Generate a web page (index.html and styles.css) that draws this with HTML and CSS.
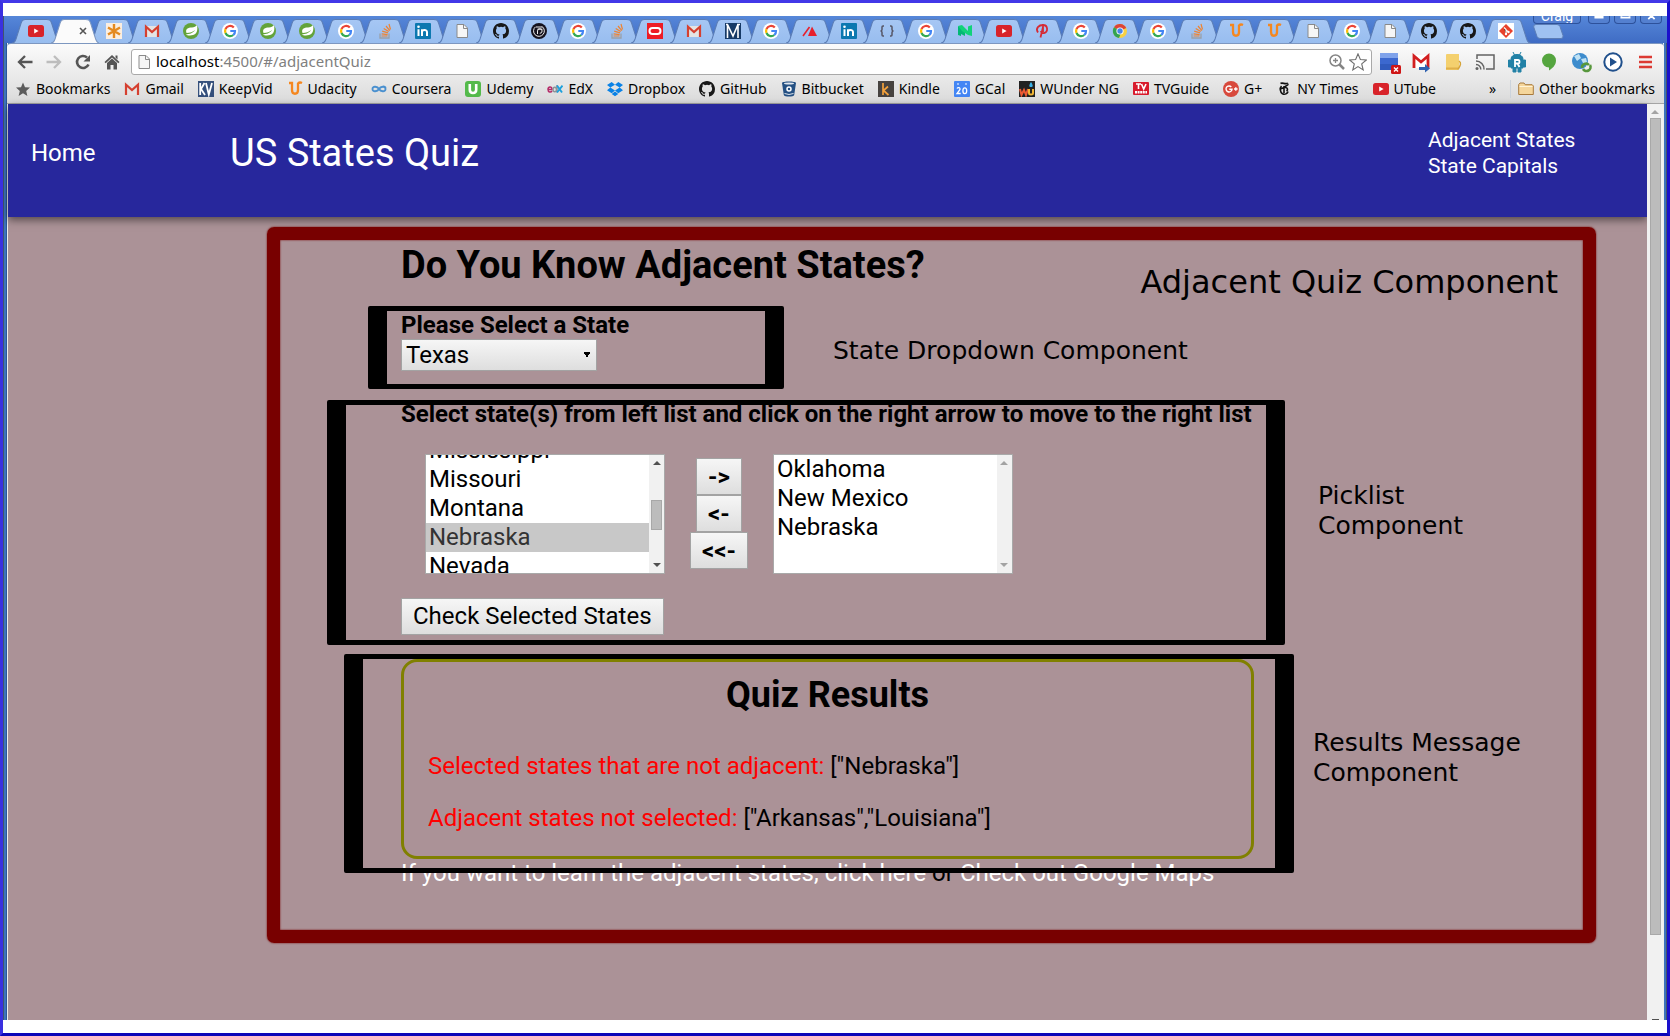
FILE: index.html
```html
<!DOCTYPE html>
<html lang="en">
<head>
<meta charset="utf-8">
<title>US States Quiz</title>
<link rel="stylesheet" href="styles.css">
</head>
<body>
<svg class="sprite" aria-hidden="true">
  <defs>
    <linearGradient id="tabfill" x1="0" y1="0" x2="0" y2="1"><stop offset="0" stop-color="#a6c7f4"/><stop offset="1" stop-color="#98bdef"/></linearGradient>
  </defs>
  <symbol id="tab" viewBox="0 0 48 24" preserveAspectRatio="none"><path d="M0 24 C3 24 3 22 4 20 L9 4 C10 1 11 .5 13 .5 L34 .5 C37 .5 38 1 39 4 L44 20 C45 22 45 24 48 24" fill="url(#tabfill)" stroke="#5b7db6"/></symbol>
  <symbol id="tab-on" viewBox="0 0 48 24" preserveAspectRatio="none"><path d="M0 24 C3 24 3 22 4 20 L9 4 C10 1 11 .5 13 .5 L34 .5 C37 .5 38 1 39 4 L44 20 C45 22 45 24 48 24" fill="#fbfbfb" stroke="#7d97c0"/></symbol>
  <symbol id="youtube" viewBox="0 0 16 16"><rect y="2" width="16" height="12" rx="2.5" fill="#d8232a"/><path d="M6.2 5.5v5l4.4-2.5z" fill="#fff"/></symbol>
  <symbol id="close" viewBox="0 0 16 16"><path d="M5 5l6 6M11 5l-6 6" stroke="#555" stroke-width="1.6"/></symbol>
  <symbol id="asterisk" viewBox="0 0 16 16"><rect width="16" height="16" fill="#fbeee0"/><path d="M8 1v14M2 4.5l12 7M14 4.5l-12 7" stroke="#e48a20" stroke-width="2.4"/></symbol>
  <symbol id="gmail" viewBox="0 0 16 16"><path d="M2 3h12v11H2z" fill="#e4e4e4"/><path d="M2 14V3.6L8 9l6-5.4V14" fill="none" stroke="#d54030" stroke-width="2.2"/></symbol>
  <symbol id="spring" viewBox="0 0 16 16"><circle cx="8" cy="8" r="8" fill="#63a33a"/><path d="M14 2c1 5 0 9-4 10-3 .8-6 .3-7-.6 3-.2 7-1 9-4.400-2 2-5 2.700-8.500 3C2 6 5 4.500 9 4.500c2 0 4-1 5-2.500z" fill="#fff"/></symbol>
  <symbol id="google" viewBox="0 0 16 16"><circle cx="8" cy="8" r="8" fill="#fff"/><g fill="none" stroke-width="2.200"><path d="M11.800 4.600A5 5 0 0 0 3.500 6" stroke="#ea4335"/><path d="M3.500 6a5 5 0 0 0 0 4" stroke="#fbbc05"/><path d="M3.500 10a5 5 0 0 0 7.800 2" stroke="#34a853"/><path d="M11.300 12A5 5 0 0 0 13 8H8.300" stroke="#4285f4"/></g></symbol>
  <symbol id="stack" viewBox="0 0 16 16"><path d="M3 10.500V15h9v-4.500" fill="none" stroke="#9aa0a8" stroke-width="1.300"/><path d="M4.500 13h6M4.600 10.800l6 .8M5.200 8.200l5.800 1.700M6.700 5.400l5 3.200M9 3l3.800 4.600M12 1l1.500 5.500" stroke="#ee8432" stroke-width="1.200"/></symbol>
  <symbol id="linkedin" viewBox="0 0 16 16"><rect width="16" height="16" rx="1" fill="#0c78b0"/><path d="M3.500 6.300V13M7 6.300V13M7 9c0-2.500 5-2.700 5 0v4" stroke="#fff" stroke-width="2" fill="none"/><circle cx="3.500" cy="3.700" r="1.300" fill="#fff"/></symbol>
  <symbol id="doc" viewBox="0 0 16 16"><path d="M3 1.500h7l3.500 3.500v9.500H3z" fill="#f6f6f6" stroke="#8a8a8a"/><path d="M9.500 1.500V5.500h4" fill="none" stroke="#8a8a8a"/></symbol>
  <symbol id="github" viewBox="0 0 16 16"><path fill="#181818" d="M8 0C3.580 0 0 3.580 0 8c0 3.540 2.290 6.530 5.470 7.590.4.070.55-.17.55-.38 0-.19-.01-.82-.01-1.490-2.010.37-2.530-.49-2.690-.94-.09-.23-.48-.94-.82-1.130-.28-.15-.68-.52-.01-.53.63-.01 1.080.58 1.230.82.720 1.210 1.870.87 2.330.66.070-.52.28-.87.51-1.070-1.780-.2-3.640-.89-3.640-3.950 0-.87.310-1.590.82-2.150-.08-.2-.36-1.020.08-2.120 0 0 .67-.21 2.200.82a7.600 7.600 0 0 1 4 0c1.530-1.040 2.200-.82 2.200-.82.440 1.100.16 1.920.08 2.120.510.560.82 1.270.82 2.150 0 3.070-1.870 3.750-3.650 3.950.290.250.540.730.540 1.480 0 1.070-.01 1.930-.01 2.200 0 .210.150.460.55.380A8 8 0 0 0 16 8c0-4.420-3.580-8-8-8z"/></symbol>
  <symbol id="target" viewBox="0 0 16 16"><circle cx="8" cy="8" r="8" fill="#15131f"/><path d="M4.500 3.800A5.400 5.400 0 1 0 11 3.500M5 4h6.500M6.500 11V8a2.300 2.300 0 1 1 2.300 2.300M6.500 6.200h5" fill="none" stroke="#eee" stroke-width="1"/></symbol>
  <symbol id="oracle" viewBox="0 0 16 16"><rect width="16" height="16" fill="#ee1c25"/><rect x="2.500" y="5" width="11" height="6" rx="3" fill="none" stroke="#fff" stroke-width="2"/></symbol>
  <symbol id="mbox" viewBox="0 0 16 16"><rect width="16" height="16" fill="#173a66"/><path d="M2.500 15V1.500L8 13l5-11.500V15M1 1.500h2M12 1.500h3" fill="none" stroke="#fff" stroke-width="1.600"/></symbol>
  <symbol id="redtri" viewBox="0 0 16 16"><path d="M10 3.500l5 9.500H6z" fill="#e8202c"/><path d="M7.500 4L1 13" stroke="#e8202c" stroke-width="1.600"/></symbol>
  <symbol id="braces" viewBox="0 0 16 16"><path d="M5 3H4Q3 3 3 4v2.500Q3 8 1.500 8 3 8 3 9.500V12q0 1 1 1h1M11 3h1q1 0 1 1v2.500Q13 8 14.500 8 13 8 13 9.500V12q0 1-1 1h-1" fill="none" stroke="#556" stroke-width="1.500"/></symbol>
  <symbol id="medium" viewBox="0 0 16 16"><path d="M1 3l7 4v6l-4-2v2l-3-1z" fill="#02b875"/><path d="M1 3l4-1 6 6V3.500L15 2v11l-4-1-6-4" fill="#10d37a"/></symbol>
  <symbol id="pin" viewBox="0 0 16 16"><path d="M4 9.500C1 5 5 2 9 2c5 0 5.500 7 1 8-1.500.3-3-.5-3-2M9 4L6.500 14.500M9 1v8" fill="none" stroke="#d52b35" stroke-width="1.800"/></symbol>
  <symbol id="chrome" viewBox="0 0 16 16"><circle cx="8" cy="8" r="7" fill="#f8d043"/><path d="M8 8L2 4.200A7 7 0 0 1 14.200 5z" fill="#dc4437"/><path d="M8 8L2 4.200A7 7 0 0 0 7 15l2-5z" fill="#32a350"/><circle cx="8" cy="8" r="3.600" fill="#fff"/><circle cx="8" cy="8" r="2.700" fill="#4a86e8"/></symbol>
  <symbol id="udacity" viewBox="0 0 16 16"><path d="M2 2h3v7c0 5 6 5 6 0V2.500c1-1 3-1 4-.5" fill="none" stroke="#f5871f" stroke-width="2.300"/></symbol>
  <symbol id="git" viewBox="0 0 16 16"><rect width="16" height="16" fill="#fff"/><path d="M8 1l7 7-7 7-7-7z" fill="#e8412c"/><path d="M6 4.500l2 2v5M8 7l2.500 2" stroke="#fff" stroke-width="1.200"/><circle cx="8" cy="11" r="1.200" fill="#fff"/><circle cx="10.500" cy="9" r="1.200" fill="#fff"/></symbol>

  <symbol id="back" viewBox="0 0 16 16"><path d="M8 2L2 8l6 6M2 8h13.500" fill="none" stroke="currentColor" stroke-width="2.300"/></symbol>
  <symbol id="reload" viewBox="0 0 16 16"><path d="M13.500 10.500A6 6 0 1 1 12 3.500" fill="none" stroke="currentColor" stroke-width="2.600"/><path d="M15 1v6.500H8.500z" fill="currentColor"/></symbol>
  <symbol id="home" viewBox="0 0 16 16"><path d="M8 1l7.500 7-1.200 1.300L8 3.600 1.700 9.300.5 8zM3 9l5-4.500L13 9v6.500H9.500V11h-3v4.500H3zM11.500 1.500h2v4l-2-2z" fill="currentColor"/></symbol>
  <symbol id="magnify" viewBox="0 0 16 16"><circle cx="6.500" cy="6.500" r="5.500" fill="none" stroke="#858585" stroke-width="1.500"/><path d="M4 6.500h5M6.500 4v5" stroke="#858585" stroke-width="1.300"/><path d="M10.500 10.500l4.500 4.500" stroke="#858585" stroke-width="2.500"/></symbol>
  <symbol id="star" viewBox="0 0 16 16"><path d="M8 .8l2.100 5 5.300.4-4.100 3.500 1.300 5.300L8 12.100 3.400 15l1.300-5.300L.6 6.200l5.300-.4z" fill="none" stroke="#6e6e6e"/></symbol>
  <symbol id="starfill" viewBox="0 0 16 16"><path d="M8 1.500l2 4.700 5 .4-3.800 3.300 1.200 5L8 12.200l-4.400 2.700 1.200-5L1 6.600l5-.4z" fill="#5c5c5c"/></symbol>
  <symbol id="keepvid" viewBox="0 0 16 16"><rect width="16" height="16" fill="#35507c"/><path d="M2.200 2v12M6.500 2L3 8l4 6M8 2l2.800 11.500L14 2" fill="none" stroke="#fff" stroke-width="1.800"/></symbol>
  <symbol id="coursera" viewBox="0 0 16 16"><path d="M8 8C6.500 5.500 1.500 4.500 1.500 8S6.500 10.500 8 8s6.500-3.500 6.500-1M8 8c1.500 2.500 6.500 3.500 6.500 0S9.500 5.500 8 8z" fill="none" stroke="#4a90cf" stroke-width="1.900"/></symbol>
  <symbol id="udemy" viewBox="0 0 16 16"><rect width="16" height="16" rx="3" fill="#54ba4b"/><path d="M4.800 3v5.800c0 4.200 6.400 4.200 6.400 0V3" fill="none" stroke="#fff" stroke-width="2.600"/></symbol>
  <symbol id="edx" viewBox="0 0 16 16"><path d="M1 8.500h4C5 5 1 5.500 1 8.500s3 3 4 1.500" fill="none" stroke="#b52b68" stroke-width="1.500"/><path d="M10 4v7.500M9.500 8.500c0-3-3.500-3-3.500 0s3.500 3 3.500 0" fill="none" stroke="#8e9498" stroke-width="1.500"/><path d="M10 4.500l5 7M15.500 4.500l-5.500 7" stroke="#1ca0dc" stroke-width="1.900"/></symbol>
  <symbol id="dropbox" viewBox="0 0 16 16"><path d="M4.700 1L8 3.700 3.300 6.600 0 4zM11.300 1L16 4l-3.300 2.600L8 3.700zM0 9.300l3.300-2.700L8 9.500l-3.300 2.700zM16 9.300l-3.300-2.700L8 9.500l3.300 2.700zM8 10.400l3.300 2.700L8 15.300l-3.300-2.200z" fill="#0a82e6"/></symbol>
  <symbol id="bitbucket" viewBox="0 0 16 16"><path d="M1 2c0-2 14-2 14 0l-1.800 12c-.5 2-9.900 2-10.400 0z" fill="#245083"/><ellipse cx="8" cy="2.500" rx="5" ry="1.100" fill="#dfe6ee"/><circle cx="8" cy="8" r="2" fill="none" stroke="#fff" stroke-width="1.500"/><path d="M3.500 12.500q4.500 2 9 0" stroke="#dfe6ee" fill="none"/></symbol>
  <symbol id="kindle" viewBox="0 0 16 16"><rect width="16" height="16" fill="#474340"/><path d="M5 2v12M10 5.500l-4.500 4L10.500 14" fill="none" stroke="#f3a13b" stroke-width="1.700"/></symbol>
  <symbol id="gcal" viewBox="0 0 16 16"><rect width="16" height="16" rx="1" fill="#4486f4"/><path d="M4 2v2M12 2v2" stroke="#cfe0ff" stroke-width="1.300"/><path d="M3 7.500c1-1.500 3.500-1 3 1L3 12.500h3.700" fill="none" stroke="#fff" stroke-width="1.300"/><ellipse cx="10.800" cy="9.700" rx="1.900" ry="2.900" fill="none" stroke="#fff" stroke-width="1.300"/></symbol>
  <symbol id="wunder" viewBox="0 0 16 16"><rect width="16" height="16" fill="#222"/><path d="M1 8l1.500 6L5 9l2 5 2-6" fill="none" stroke="#ee5a32" stroke-width="2"/><path d="M10 8v4c0 2 4 2 4 0V8" fill="none" stroke="#f2b632" stroke-width="2"/><path d="M12 1c2 3 2.500 5 0 5s-2-2 0-5z" fill="#3ab3e8"/></symbol>
  <symbol id="tvguide" viewBox="0 0 16 16"><rect y="1" width="16" height="13" rx="1" fill="#d81b2c"/><path d="M3 3h5M5.500 3v5M8.500 3l2.200 5L13 3" fill="none" stroke="#fff" stroke-width="1.600"/><path d="M2 11.300h12" stroke="#fff" stroke-width="2.600" stroke-dasharray="2 .6"/></symbol>
  <symbol id="gplus" viewBox="0 0 16 16"><circle cx="8" cy="8" r="8" fill="#d8493c"/><path d="M8.300 6A3 3 0 1 0 9 8.300H6.300M11 8h3.600M12.800 6.200v3.600" fill="none" stroke="#fff" stroke-width="1.400"/></symbol>
  <symbol id="nyt" viewBox="0 0 16 16"><path d="M4.500 2.500c2-1.500 5 1.500 7.500-.5M5.500 5C3.500 7 4 11 6.500 12.800c2.500 1.200 5-.3 5.500-2.300M8 5v7M12 3c.5 2-4 1.500-2.500 3.500C12 7 12 9 10.500 10M4.500 8L8 6.500" fill="none" stroke="#111" stroke-width="1.600"/></symbol>
  <symbol id="folder" viewBox="0 0 16 16"><path d="M.7 13.500v-10L2 2h4l1.200 1.700h7l1.100 1.200v8.600z" fill="#f5d69b" stroke="#a87a3c"/><path d="M1.500 5.500h13" stroke="#fff3d5"/></symbol>
  <symbol id="x-cal" viewBox="0 0 24 24"><path d="M3 3h18v17H3z" fill="#3c68cf"/><path d="M3 3h18v5H3z" fill="#7fa2ea"/><path d="M3 14h18v6H3z" fill="#315bbd"/><rect x="14" y="15" width="10" height="9" rx="1.500" fill="#cf1616"/><path d="M17 17.500l4 4M21 17.500l-4 4" stroke="#fff" stroke-width="1.400"/></symbol>
  <symbol id="x-mail" viewBox="0 0 24 24"><rect x="4" y="5" width="16" height="13" fill="#fff"/><path d="M5 18V6l7 6 7-6v12" fill="none" stroke="#d21f20" stroke-width="2.800"/><path d="M10 17h6v-3l5 4.500-5 4V20h-6z" fill="#2f62b0"/></symbol>
  <symbol id="x-note" viewBox="0 0 24 24"><path d="M5 5q0-1 1-1h12v14l-1 2H5z" fill="#f4d06e"/><path d="M5 17.500h12v2H5z" fill="#e0b04a"/><path d="M18 11c3 2 1 5-1 8.500" stroke="#d6a439" stroke-width="1.500" fill="none"/></symbol>
  <symbol id="x-cast" viewBox="0 0 24 24"><path d="M4 9V5h17v14h-8M3 11a8 8 0 0 1 8 8.500M3 14.500a5 5 0 0 1 4.800 5" fill="none" stroke="#636363" stroke-width="1.500"/><circle cx="4" cy="18.500" r="1.500" fill="#636363"/></symbol>
  <symbol id="x-bot" viewBox="0 0 24 24"><path d="M6 9c0-6 12-6 12 0v9H6zM3.500 10h2v7h-2zM18.500 10h2v7h-2zM8 18h3v4H8zM13 18h3v4h-3zM8 2l2 4M16 2l-2 4" fill="#2281a6" stroke="#2281a6"/><path d="M10 17v-7h3c2 0 2 3.500 0 3.500h-3M12.500 13.500L14.500 17" fill="none" stroke="#fff" stroke-width="1.800"/></symbol>
  <symbol id="x-hang" viewBox="0 0 24 24"><path d="M12 3.500a7 7 0 0 1 7 7c0 5-4 8-7 10v-3a7 7 0 0 1 0-14z" fill="#55a53f"/></symbol>
  <symbol id="x-globe" viewBox="0 0 24 24"><circle cx="11" cy="11" r="8" fill="#3d8ccd"/><path d="M5 6l5-2 2 4-4 3zM12 9l5-1 1 4-3 3z" fill="#bfe1f4"/><path d="M13 18a4 4 0 0 1 7-3M21 15a4 4 0 0 1-7 4" fill="none" stroke="#57973c" stroke-width="2.600"/></symbol>
  <symbol id="x-play" viewBox="0 0 24 24"><circle cx="12" cy="12" r="8.700" fill="#fff" stroke="#20508c" stroke-width="2"/><path d="M9 7.500v9l7-4.500z" fill="#20508c"/></symbol>
  <symbol id="x-menu" viewBox="0 0 24 24"><path d="M6 7h13M6 12h13M6 17h13" stroke="#dc3a33" stroke-width="2.600"/></symbol>
</svg>

<div class="browser">
  <div class="titlebar">
    <nav class="tabs" aria-label="Open tabs">
      <button class="tab"><svg class="shape"><use href="#tab"/></svg><svg class="fav"><use href="#youtube"/></svg></button>
      <button class="tab current"><svg class="shape"><use href="#tab-on"/></svg><svg class="fav"><use href="#close"/></svg></button>
      <button class="tab"><svg class="shape"><use href="#tab"/></svg><svg class="fav"><use href="#asterisk"/></svg></button>
      <button class="tab"><svg class="shape"><use href="#tab"/></svg><svg class="fav"><use href="#gmail"/></svg></button>
      <button class="tab"><svg class="shape"><use href="#tab"/></svg><svg class="fav"><use href="#spring"/></svg></button>
      <button class="tab"><svg class="shape"><use href="#tab"/></svg><svg class="fav"><use href="#google"/></svg></button>
      <button class="tab"><svg class="shape"><use href="#tab"/></svg><svg class="fav"><use href="#spring"/></svg></button>
      <button class="tab"><svg class="shape"><use href="#tab"/></svg><svg class="fav"><use href="#spring"/></svg></button>
      <button class="tab"><svg class="shape"><use href="#tab"/></svg><svg class="fav"><use href="#google"/></svg></button>
      <button class="tab"><svg class="shape"><use href="#tab"/></svg><svg class="fav"><use href="#stack"/></svg></button>
      <button class="tab"><svg class="shape"><use href="#tab"/></svg><svg class="fav"><use href="#linkedin"/></svg></button>
      <button class="tab"><svg class="shape"><use href="#tab"/></svg><svg class="fav"><use href="#doc"/></svg></button>
      <button class="tab"><svg class="shape"><use href="#tab"/></svg><svg class="fav"><use href="#github"/></svg></button>
      <button class="tab"><svg class="shape"><use href="#tab"/></svg><svg class="fav"><use href="#target"/></svg></button>
      <button class="tab"><svg class="shape"><use href="#tab"/></svg><svg class="fav"><use href="#google"/></svg></button>
      <button class="tab"><svg class="shape"><use href="#tab"/></svg><svg class="fav"><use href="#stack"/></svg></button>
      <button class="tab"><svg class="shape"><use href="#tab"/></svg><svg class="fav"><use href="#oracle"/></svg></button>
      <button class="tab"><svg class="shape"><use href="#tab"/></svg><svg class="fav"><use href="#gmail"/></svg></button>
      <button class="tab"><svg class="shape"><use href="#tab"/></svg><svg class="fav"><use href="#mbox"/></svg></button>
      <button class="tab"><svg class="shape"><use href="#tab"/></svg><svg class="fav"><use href="#google"/></svg></button>
      <button class="tab"><svg class="shape"><use href="#tab"/></svg><svg class="fav"><use href="#redtri"/></svg></button>
      <button class="tab"><svg class="shape"><use href="#tab"/></svg><svg class="fav"><use href="#linkedin"/></svg></button>
      <button class="tab"><svg class="shape"><use href="#tab"/></svg><svg class="fav"><use href="#braces"/></svg></button>
      <button class="tab"><svg class="shape"><use href="#tab"/></svg><svg class="fav"><use href="#google"/></svg></button>
      <button class="tab"><svg class="shape"><use href="#tab"/></svg><svg class="fav"><use href="#medium"/></svg></button>
      <button class="tab"><svg class="shape"><use href="#tab"/></svg><svg class="fav"><use href="#youtube"/></svg></button>
      <button class="tab"><svg class="shape"><use href="#tab"/></svg><svg class="fav"><use href="#pin"/></svg></button>
      <button class="tab"><svg class="shape"><use href="#tab"/></svg><svg class="fav"><use href="#google"/></svg></button>
      <button class="tab"><svg class="shape"><use href="#tab"/></svg><svg class="fav"><use href="#chrome"/></svg></button>
      <button class="tab"><svg class="shape"><use href="#tab"/></svg><svg class="fav"><use href="#google"/></svg></button>
      <button class="tab"><svg class="shape"><use href="#tab"/></svg><svg class="fav"><use href="#stack"/></svg></button>
      <button class="tab"><svg class="shape"><use href="#tab"/></svg><svg class="fav"><use href="#udacity"/></svg></button>
      <button class="tab"><svg class="shape"><use href="#tab"/></svg><svg class="fav"><use href="#udacity"/></svg></button>
      <button class="tab"><svg class="shape"><use href="#tab"/></svg><svg class="fav"><use href="#doc"/></svg></button>
      <button class="tab"><svg class="shape"><use href="#tab"/></svg><svg class="fav"><use href="#google"/></svg></button>
      <button class="tab"><svg class="shape"><use href="#tab"/></svg><svg class="fav"><use href="#doc"/></svg></button>
      <button class="tab"><svg class="shape"><use href="#tab"/></svg><svg class="fav"><use href="#github"/></svg></button>
      <button class="tab"><svg class="shape"><use href="#tab"/></svg><svg class="fav"><use href="#github"/></svg></button>
      <button class="tab"><svg class="shape"><use href="#tab"/></svg><svg class="fav"><use href="#git"/></svg></button>
    </nav>
    <button class="newtab" aria-label="New tab"><svg viewBox="0 0 31 15"><path d="M3 .5h21q2 0 3 2l3 9q.5 3-2 3H7q-2 0-3-2L.7 3q-.5-2.500 2.300-2.500z" fill="#9fc2f2" stroke="#5b7db6"/></svg></button>
    <div class="controls">
      <button class="user">Craig</button>
      <button class="win" aria-label="Minimize"><svg viewBox="0 0 22 7"><path d="M6 1h10" stroke="#fff" stroke-width="3"/></svg></button>
      <button class="win" aria-label="Maximize"><svg viewBox="0 0 22 7"><path d="M7 0v1.500h9V0" fill="none" stroke="#fff" stroke-width="2"/></svg></button>
      <button class="win" aria-label="Close"><svg viewBox="0 0 22 7"><path d="M8 3l3.500-3.500L15 3" fill="none" stroke="#fff" stroke-width="2"/></svg></button>
    </div>
  </div>

  <div class="chrome">
    <div class="toolbar">
      <div class="navbtns">
        <button aria-label="Back"><svg class="fav"><use href="#back"/></svg></button>
        <button class="off" aria-label="Forward"><svg class="fav flip"><use href="#back"/></svg></button>
        <button aria-label="Reload"><svg class="fav"><use href="#reload"/></svg></button>
        <button aria-label="Home page"><svg class="fav"><use href="#home"/></svg></button>
      </div>
      <div class="omnibox">
        <svg class="fav"><use href="#doc"/></svg>
        <span class="url" role="textbox" aria-label="Address">localhost<span>:4500/#/adjacentQuiz</span></span>
        <svg class="fav"><use href="#magnify"/></svg>
        <svg class="fav big"><use href="#star"/></svg>
      </div>
      <div class="extensions">
        <svg><use href="#x-cal"/></svg><svg><use href="#x-mail"/></svg><svg><use href="#x-note"/></svg><svg><use href="#x-cast"/></svg><svg><use href="#x-bot"/></svg><svg><use href="#x-hang"/></svg><svg><use href="#x-globe"/></svg><svg><use href="#x-play"/></svg><svg><use href="#x-menu"/></svg>
      </div>
    </div>
    <nav class="bookmarks" aria-label="Bookmarks">
      <a href="#"><svg class="fav"><use href="#starfill"/></svg>Bookmarks</a>
      <a href="#"><svg class="fav"><use href="#gmail"/></svg>Gmail</a>
      <a href="#"><svg class="fav"><use href="#keepvid"/></svg>KeepVid</a>
      <a href="#"><svg class="fav"><use href="#udacity"/></svg>Udacity</a>
      <a href="#"><svg class="fav"><use href="#coursera"/></svg>Coursera</a>
      <a href="#"><svg class="fav"><use href="#udemy"/></svg>Udemy</a>
      <a href="#"><svg class="fav"><use href="#edx"/></svg>EdX</a>
      <a href="#"><svg class="fav"><use href="#dropbox"/></svg>Dropbox</a>
      <a href="#"><svg class="fav"><use href="#github"/></svg>GitHub</a>
      <a href="#"><svg class="fav"><use href="#bitbucket"/></svg>Bitbucket</a>
      <a href="#"><svg class="fav"><use href="#kindle"/></svg>Kindle</a>
      <a href="#"><svg class="fav"><use href="#gcal"/></svg>GCal</a>
      <a href="#"><svg class="fav"><use href="#wunder"/></svg>WUnder NG</a>
      <a href="#"><svg class="fav"><use href="#tvguide"/></svg>TVGuide</a>
      <a href="#"><svg class="fav"><use href="#gplus"/></svg>G+</a>
      <a href="#"><svg class="fav"><use href="#nyt"/></svg>NY Times</a>
      <a href="#"><svg class="fav"><use href="#youtube"/></svg>UTube</a>
      <button class="more">»</button>
      <a class="other" href="#"><svg class="fav"><use href="#folder"/></svg>Other bookmarks</a>
    </nav>
  </div>

  <div class="viewport">
    <div class="page">
      <header class="site">
        <a class="homelink" href="#">Home</a>
        <span class="brand">US States Quiz</span>
        <nav class="menu" aria-label="Quizzes"><a href="#">Adjacent States</a><a href="#">State Capitals</a></nav>
      </header>
      <main class="quiz">
        <span class="note note-quiz">Adjacent Quiz Component</span>
        <div class="column">
          <h1>Do You Know Adjacent States?</h1>
          <section class="part dropdown">
            <label for="state">Please Select a State</label>
            <select id="state"><option>Texas</option></select>
            <span class="note note-dropdown">State Dropdown Component</span>
          </section>
          <section class="part picklist">
            <h3 id="pick">Select state(s) from left list and click on the right arrow to move to the right list</h3>
            <div class="lists">
              <div class="listbox">
                <select id="from" multiple aria-labelledby="pick">
                  <option>Michigan</option><option>Minnesota</option><option>Mississippi</option><option>Missouri</option><option>Montana</option><option class="picked">Nebraska</option><option>Nevada</option><option>New Hampshire</option><option>New Jersey</option>
                </select>
                <div class="bar"><i class="up"></i><i class="thumb"></i><i class="down"></i></div>
              </div>
              <div class="movers"><button>-&gt;</button><button>&lt;-</button><button>&lt;&lt;-</button></div>
              <div class="listbox idle">
                <select multiple aria-label="Adjacent states picked"><option>Oklahoma</option><option>New Mexico</option><option>Nebraska</option></select>
                <div class="bar"><i class="up"></i><i class="down"></i></div>
              </div>
            </div>
            <button class="check">Check Selected States</button>
            <span class="note note-picklist">Picklist<br>Component</span>
          </section>
          <section class="part results">
            <div class="panel">
              <h2>Quiz Results</h2>
              <p><em>Selected states that are not adjacent:</em> ["Nebraska"]</p>
              <p><em>Adjacent states not selected:</em> ["Arkansas","Louisiana"]</p>
            </div>
            <span class="note note-results">Results Message<br>Component</span>
          </section>
          <p class="learn"><a href="#">If you want to learn the adjacent states, click here</a> or <a href="#">Check out Google Maps</a></p>
        </div>
      </main>
    </div>
    <div class="scroll"><i class="up"></i><i class="thumb"></i><i class="dash"></i></div>
  </div>
</div>
<script src="script.js"></script>
</body>
</html>
```
FILE: styles.css
```css
* { box-sizing: border-box; }
body {
  margin: 0;
  min-height: 100vh;
  display: flex;
  flex-direction: column;
  padding: 13px 0;
  border: 3px solid;
  border-color: #4238e8 #1a10cc #0c06b8 #3a30e0;
  background: #fff;
  font-family: Roboto, sans-serif;
  color: #000;
}
button, select { font: inherit; color: inherit; margin: 0; }
a { color: inherit; text-decoration: none; }
.sprite { position: absolute; width: 0; height: 0; }
.fav { display: block; width: 16px; height: 16px; flex: none; }

.browser {
  flex: 1;
  display: flex;
  flex-direction: column;
  padding: 0 4px 0 5px;
  background: linear-gradient(90deg, #42536e 0 1px, #3c74bb 1px 3px, #2a559b 3px 4px, #eee 4px 5px, #3c74bb 5px calc(100% - 4px), #eee calc(100% - 4px) calc(100% - 3px), #3c74bb calc(100% - 3px) calc(100% - 1px), #42536e calc(100% - 1px));
}
.titlebar {
  height: 27px;
  margin: 0 -4px;
  padding-left: 13px;
  display: flex;
  align-items: flex-end;
  background: linear-gradient(#5687d9, #3f6cc4);
}
.tabs { flex: 1; display: flex; height: 24px; }
.tab {
  flex: 1;
  position: relative;
  display: grid;
  place-items: center;
  padding: 0;
  border: 0;
  background: none;
}
.tab .shape { position: absolute; left: -5px; top: 0; width: calc(100% + 10px); height: 100%; }
.tab .fav { position: relative; }
.tab.current { z-index: 1; }
.tab.current .fav { left: 8px; }
.newtab { margin: 0 0 4px 7px; padding: 0; border: 0; background: none; width: 31px; height: 15px; }
.newtab svg { display: block; }
.controls { display: flex; align-self: flex-start; gap: 4px; margin-left: -31px; padding-right: 5px; }
.controls button {
  height: 8px;
  padding: 0;
  overflow: hidden;
  border: 1px solid #2d519b;
  border-top: 0;
  border-radius: 0 0 4px 4px;
  background: #5480d0;
  color: #fff;
}
.controls .user { display: flex; align-items: flex-end; justify-content: center; width: 48px; margin-right: 3px; font-size: 14px; line-height: 14px; }
.controls .win { width: 22px; }
.controls svg { display: block; width: 20px; height: 7px; }

.chrome {
  margin: 0 -1px;
  border-top: 1px solid #7d97c0;
  border-bottom: 1px solid #a5a5a5;
  border-radius: 4px 4px 0 0;
  background: linear-gradient(#fbfbfb, #dbdbdb);
}
.toolbar { display: flex; align-items: center; height: 36px; padding: 0 7px 0 10px; }
.navbtns { display: flex; gap: 13px; width: 114px; color: #555; }
.navbtns button { padding: 0; border: 0; background: none; }
.navbtns .off { color: #bdbdbd; }
.flip { transform: scaleX(-1); }
.omnibox {
  flex: 1;
  display: flex;
  align-items: center;
  gap: 4px;
  height: 26px;
  padding: 0 4px;
  border: 1px solid #a9a9a9;
  border-radius: 3px;
  background: #fff;
  font: 15px/24px "Noto Sans", sans-serif;
}
.url { flex: 1; padding-bottom: 2px; }
.url span { color: #808080; }
.fav.big { width: 18px; height: 18px; }
.extensions { display: flex; gap: 8px; margin-left: 5px; }
.extensions svg { width: 24px; height: 24px; }
.bookmarks {
  display: flex;
  align-items: center;
  gap: 14px;
  height: 23px;
  padding: 0 9px 5px 8px;
  font: 14px/18px "Noto Sans", sans-serif;
}
.bookmarks a { display: flex; align-items: center; gap: 5px; white-space: nowrap; }
.more { margin-left: auto; padding: 0; border: 0; background: none; }
.other { padding-left: 7px; border-left: 1px solid #ccd3dc; }

.viewport { flex: 1; display: grid; grid-template-columns: 1fr 16px; }
.page { background: #ab9297; }
.site {
  display: grid;
  grid-template-columns: 199px 1fr 197px;
  align-items: center;
  height: 113px;
  padding: 0 22px 16px 23px;
  background: #27279c;
  color: #fff;
  font-size: 24px;
  box-shadow: 0 3px 8px rgba(0, 0, 0, .5);
}
.brand { font-size: 38px; }
.menu { display: flex; flex-direction: column; font-size: 21px; line-height: 26px; }
.quiz {
  position: relative;
  margin: 10px 51px 77px 259px;
  padding: 4px 0 43px 121px;
  border: 13px solid #780000;
  border-radius: 7px;
  box-shadow: 0 0 2px #780000, inset 0 0 2px #780000;
  font-size: 24px;
  line-height: 28px;
}
.column { width: max-content; min-width: 853px; }
h1, h2, h3, p { margin: 0; }
h1 { font-size: 38px; line-height: 42px; }
h2 { font-size: 36px; line-height: 42px; }
h3 { font-size: 24px; line-height: 28px; }
.part { position: relative; }
.part::after {
  content: "";
  position: absolute;
  border: solid #000;
  border-width: 5px 19px;
  border-radius: 2px;
  pointer-events: none;
}
.dropdown { margin-top: 25px; width: 383px; }
.dropdown::after { inset: -5px 0 -18px -33px; }
.dropdown label { display: block; font-weight: bold; }
#state {
  appearance: none;
  display: block;
  width: 196px;
  height: 32px;
  padding: 0 4px;
  border: 1px solid #a3a3a3;
  border-radius: 0;
  background:
    conic-gradient(from -30deg at 50% 100%, #000 60deg, transparent 0) right 6px center / 6px 6px no-repeat,
    linear-gradient(#f6f6f6, #dedede);
}
.picklist { margin-top: 29px; }
.picklist::after { inset: 0 -31px -10px -74px; }
.lists { display: flex; align-items: flex-start; gap: 25px; margin: 26px 24px 24px; }
.listbox { display: flex; width: 240px; height: 120px; border: 1px solid #a9a9a9; background: #fff; }
.listbox select {
  flex: 1;
  min-width: 0;
  height: 118px;
  padding: 0;
  border: 0;
  outline: 0;
  background: #fff;
  scrollbar-width: none;
}
.listbox option { padding: 0 3px; min-height: 29px; line-height: 29px; }
.listbox .picked { background: #c8c8c8; color: #333; }
.bar { display: flex; flex-direction: column; align-items: center; width: 15px; padding: 6px 0; background: #f1f1f1; color: #505050; }
.idle .bar { color: #a3a3a3; }
.up, .down { border: 4px solid transparent; width: 0; height: 0; }
.up { border-top: 0; border-bottom-color: currentColor; }
.down { border-bottom: 0; border-top-color: currentColor; margin-top: auto; }
.thumb { background: #bcbcbc; border: 1px solid #a8a8a8; }
.bar .thumb { width: 11px; height: 30px; margin-top: 35px; }
.movers { display: flex; flex-direction: column; align-items: center; padding-top: 4px; font-weight: bold; }
.movers button, .check {
  height: 37px;
  padding: 0 11px;
  border: 1px solid #a3a3a3;
  border-radius: 0;
  background: linear-gradient(#f6f6f6, #dedede);
  line-height: 28px;
}
.check { padding-bottom: 2px; }
.results { margin-top: 24px; }
.results::after { inset: -5px -40px -14px -57px; }
.panel { padding: 12px 24px 24px; border: 3px solid #808000; border-radius: 16px; }
.panel h2 { text-align: center; margin-bottom: 36px; }
.panel p + p { margin-top: 24px; }
.panel em { font-style: normal; color: #f00; }
.learn a { color: #fff; }
.note { position: absolute; font: 25px/30px "DejaVu Sans", sans-serif; white-space: nowrap; }
.note-quiz { right: 25px; top: 24px; font-size: 32px; line-height: 36px; }
.note-dropdown { left: 432px; top: 25px; }
.note-picklist { left: 917px; top: 81px; }
.note-results { left: 912px; top: 69px; }

.scroll { display: flex; flex-direction: column; align-items: center; padding-top: 6px; background: #f1f1f1; color: #a3a3a3; }
.scroll .thumb { flex: 1; width: 11px; margin: 4px 0 84px; }
.dash { width: 7px; height: 1px; background: #505050; }
```
FILE: script.js
```js
// Start the left list part-way through, with Missouri near the top.
document.getElementById('from').scrollTop = 77;
```
